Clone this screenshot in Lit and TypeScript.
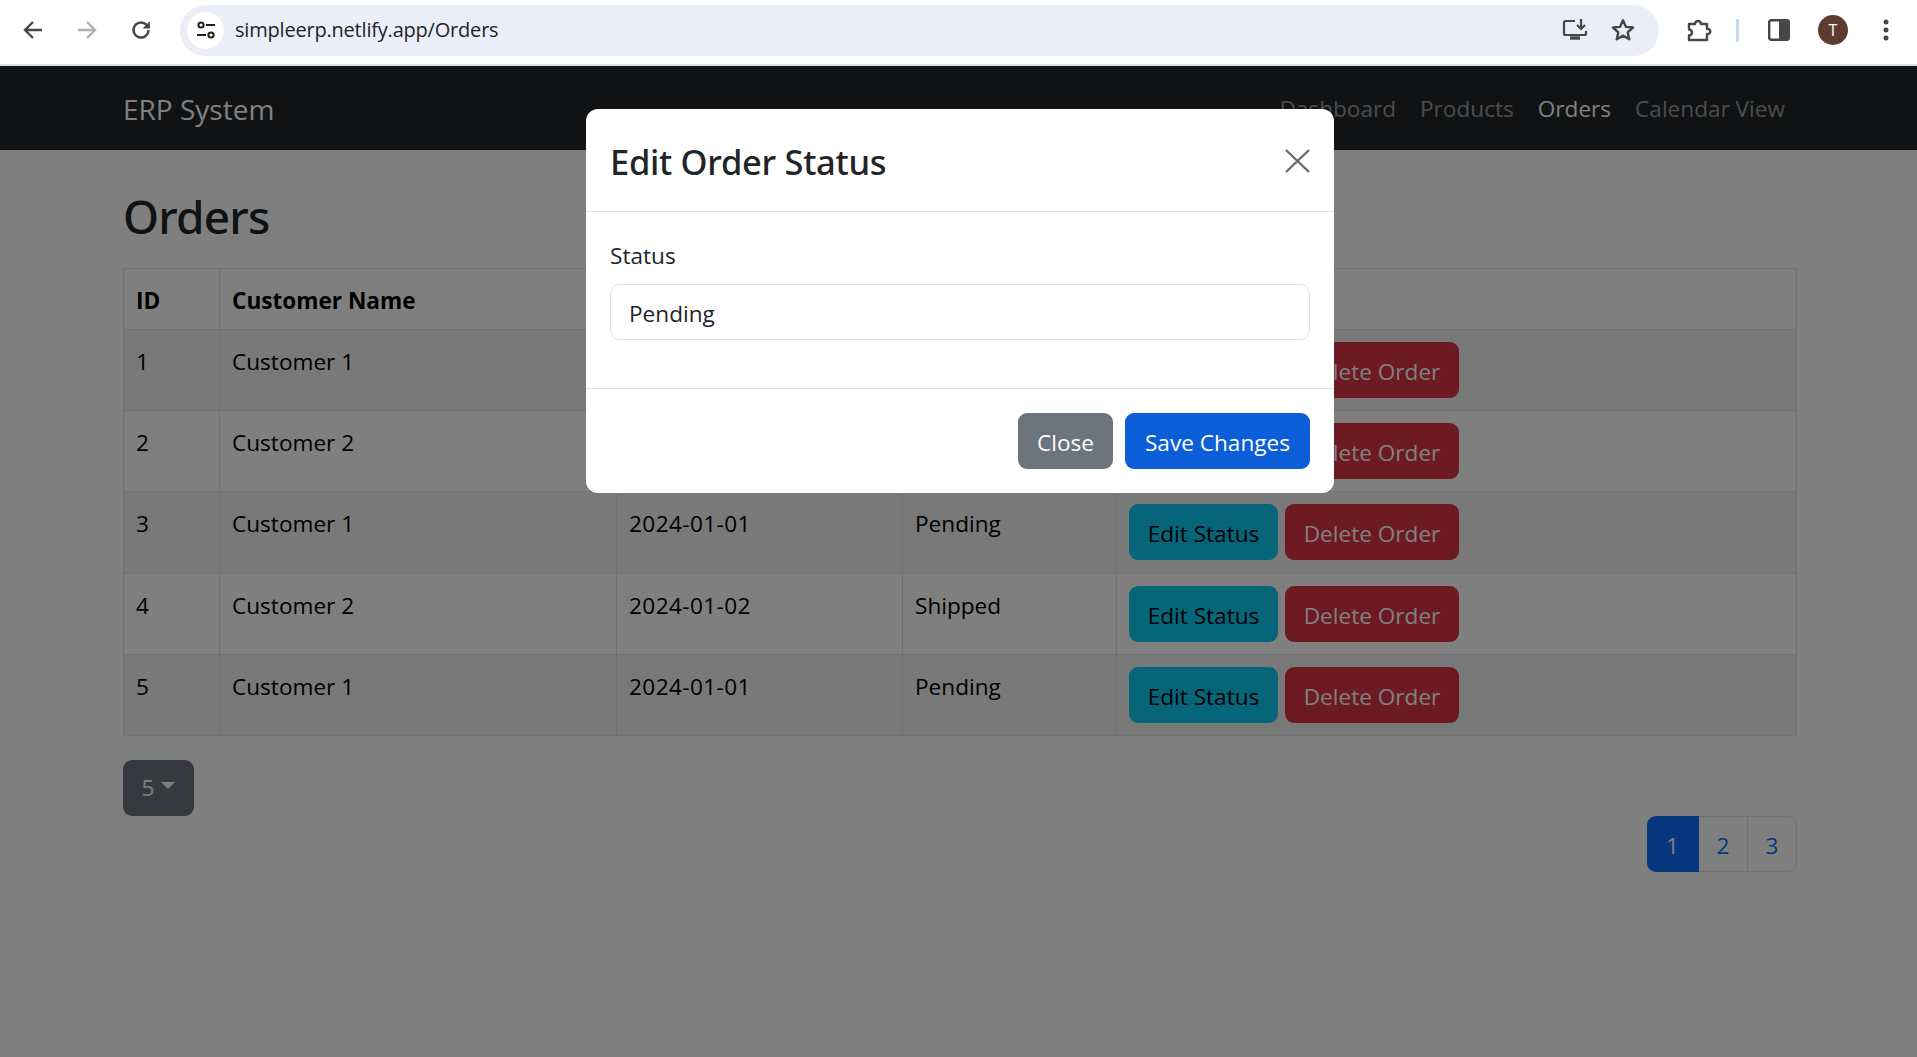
import { LitElement, html, css } from "lit";
import { customElement } from "lit/decorators.js";

const orders = [
  { id: 1, customer: "Customer 1", date: "2024-01-01", status: "Pending" },
  { id: 2, customer: "Customer 2", date: "2024-01-02", status: "Shipped" },
  { id: 3, customer: "Customer 1", date: "2024-01-01", status: "Pending" },
  { id: 4, customer: "Customer 2", date: "2024-01-02", status: "Shipped" },
  { id: 5, customer: "Customer 1", date: "2024-01-01", status: "Pending" },
];

@customElement("browser-bar")
export class BrowserBar extends LitElement {
  static styles = css`
    :host {
      display: flex;
      align-items: center;
      background: #fff;
      border-bottom: 2px solid #dfe0e2;
      padding: 0 0 4px 0;
      box-sizing: content-box;
      height: 60px;
      font-family: "Open Sans", sans-serif;
    }
    svg {
      display: block;
      flex: none;
    }
    .nav {
      display: flex;
      gap: 30px;
      margin-left: 21px;
      margin-right: 27px;
    }
    .pill {
      display: flex;
      align-items: center;
      width: 1479px;
      height: 51px;
      border-radius: 26px;
      background: #ebeef8;
      box-sizing: border-box;
      padding: 0 23px 0 7px;
    }
    .site {
      display: flex;
      align-items: center;
      justify-content: center;
      width: 37px;
      height: 37px;
      border-radius: 50%;
      background: #fff;
      margin-right: 11px;
    }
    .url {
      font-size: 20px;
      letter-spacing: -0.2px;
      color: #1f2328;
      flex: 1;
    }
    .pill-icons {
      display: flex;
      gap: 22px;
      align-items: center;
    }
    .tools {
      display: flex;
      align-items: center;
      margin-left: 27px;
    }
    .divider {
      width: 3px;
      height: 23px;
      background: #c9d8f6;
      margin: 0 29px 0 24px;
    }
    .avatar {
      width: 30px;
      height: 30px;
      border-radius: 50%;
      background: #5d3b31;
      color: #fff;
      font-size: 16px;
      display: flex;
      align-items: center;
      justify-content: center;
      margin: 0 35px 0 28px;
    }
  `;

  render() {
    return html`
      <div class="nav">
        <svg width="24" height="24" viewBox="0 0 24 24" fill="none" stroke="#474747" stroke-width="2.4">
          <path d="M21 12H4M12 4l-8 8 8 8" />
        </svg>
        <svg width="24" height="24" viewBox="0 0 24 24" fill="none" stroke="#b0b0b0" stroke-width="2.4">
          <path d="M3 12h17M12 4l8 8-8 8" />
        </svg>
        <svg width="24" height="24" viewBox="0 0 24 24" fill="none" stroke="#474747" stroke-width="2.4">
          <path d="M19.5 12a7.5 7.5 0 1 1-2.2-5.3L20 9.5" />
          <path d="M20.8 3.2v7.2h-7.2z" fill="#474747" stroke="none" />
        </svg>
      </div>
      <div class="pill">
        <div class="site">
          <svg width="20" height="20" viewBox="0 0 20 20" fill="none" stroke="#1f1f1f" stroke-width="2">
            <circle cx="5" cy="5" r="2.6" />
            <path d="M10 5h9M1 15h9" />
            <circle cx="15" cy="15" r="2.6" />
          </svg>
        </div>
        <span class="url">simpleerp.netlify.app/Orders</span>
        <div class="pill-icons">
          <svg width="26" height="24" viewBox="0 0 26 24" fill="none" stroke="#474747" stroke-width="2.2">
            <path d="M13 3H3.5a1.5 1.5 0 0 0-1.5 1.5v11A1.5 1.5 0 0 0 3.5 17h19a1.5 1.5 0 0 0 1.5-1.5V13" />
            <path d="M19 1v9M15 7l4 4 4-4" />
            <path d="M8 20h10" stroke-width="3.4" />
          </svg>
          <svg width="26" height="26" viewBox="0 0 24 24" fill="none" stroke="#474747" stroke-width="2.2" stroke-linejoin="round">
            <path d="M12 3l2.7 6.1 6.6.6-5 4.4 1.5 6.5L12 17.2l-5.8 3.4 1.5-6.5-5-4.4 6.6-.6z" />
          </svg>
        </div>
      </div>
      <div class="tools">
        <svg width="26" height="26" viewBox="0 0 26 26" fill="none" stroke="#474747" stroke-width="2.4" stroke-linejoin="round">
          <path d="M3 7h6a3 3 0 1 1 6 0h6v5a2.6 2.6 0 1 1 0 5v6H3v-4.5a3 3 0 1 0 0-6z" />
        </svg>
        <div class="divider"></div>
        <svg width="22" height="22" viewBox="0 0 22 22" fill="none">
          <rect x="1.2" y="1.2" width="19.6" height="19.6" rx="2" stroke="#474747" stroke-width="2.4" />
          <rect x="11" y="1" width="10" height="20" rx="1.5" fill="#474747" />
        </svg>
        <div class="avatar">T</div>
        <svg width="6" height="24" viewBox="0 0 6 24" fill="#474747">
          <circle cx="3" cy="4" r="2.5" />
          <circle cx="3" cy="12" r="2.5" />
          <circle cx="3" cy="20" r="2.5" />
        </svg>
      </div>
    `;
  }
}

@customElement("app-root")
export class AppRoot extends LitElement {
  static styles = css`
    :host {
      display: block;
      width: 1917px;
      height: 1057px;
      overflow: hidden;
      background: #fff;
      color: #212529;
      font-family: "Open Sans", sans-serif;
      font-size: 22.6px;
      line-height: 36px;
    }
    .page {
      position: relative;
      height: 991px;
    }
    .navbar {
      display: flex;
      align-items: center;
      justify-content: space-between;
      height: 84px;
      box-sizing: border-box;
      padding: 2px 120px 0 123px;
      background: #212529;
    }
    .brand {
      color: #fff;
      font-size: 28px;
    }
    .links {
      display: flex;
    }
    .links a {
      color: rgba(255, 255, 255, 0.55);
      padding: 0 12px;
    }
    .links a.active {
      color: #fff;
    }
    main {
      padding: 0 120px 0 123px;
    }
    h1 {
      margin: 0;
      padding: 38px 0 24px;
      font-family: "Noto Sans", sans-serif;
      font-size: 46px;
      font-weight: 500;
      letter-spacing: -0.8px;
      line-height: 56px;
    }
    table {
      width: 1673px;
      table-layout: fixed;
      border-collapse: collapse;
      color: #000;
    }
    th,
    td {
      border: 1px solid #dee2e6;
      padding: 14px 12px 10px;
      text-align: left;
      vertical-align: top;
      box-sizing: border-box;
    }
    th {
      height: 61px;
      font-weight: 700;
    }
    td {
      height: 81.2px;
    }
    td.date {
      letter-spacing: 0.4px;
    }
    tbody tr:nth-child(odd) td {
      background: rgba(0, 0, 0, 0.05);
    }
    .btn {
      display: inline-block;
      height: 56px;
      line-height: 60px;
      border-radius: 9px;
      text-align: center;
      box-sizing: border-box;
    }
    .actions {
      display: flex;
      gap: 7px;
      margin-top: -2px;
    }
    .info {
      width: 149px;
      background: #0dcaf0;
      color: #000;
    }
    .danger {
      width: 174px;
      background: #dc3545;
      color: #fff;
    }
    .dropdown {
      display: flex;
      align-items: center;
      justify-content: center;
      gap: 7px;
      width: 71px;
      margin-top: 24px;
      background: #6c757d;
      color: #fff;
    }
    .caret {
      border-top: 7px solid #fff;
      border-left: 7px solid transparent;
      border-right: 7px solid transparent;
      margin-top: -4px;
    }
    .pager {
      display: flex;
      justify-content: flex-end;
    }
    .pager span {
      height: 56px;
      line-height: 58px;
      text-align: center;
      box-sizing: border-box;
      border: 1px solid #dee2e6;
      border-left: none;
      color: #0d6efd;
      width: 49px;
    }
    .pager span.active {
      width: 52px;
      background: #0d6efd;
      border-color: #0d6efd;
      color: #fff;
      border-radius: 9px 0 0 9px;
    }
    .pager span:last-child {
      border-radius: 0 9px 9px 0;
    }
    .backdrop {
      position: absolute;
      inset: 0;
      background: rgba(0, 0, 0, 0.5);
    }
    .modal {
      position: absolute;
      top: 43px;
      left: 586px;
      width: 748px;
      background: #fff;
      border-radius: 12px;
      color: #212529;
    }
    .modal-header {
      display: flex;
      align-items: center;
      justify-content: space-between;
      height: 103px;
      box-sizing: border-box;
      padding: 0 24px;
      border-bottom: 1px solid #dee2e6;
    }
    .modal-title {
      font-family: "Noto Sans", sans-serif;
      font-size: 34.5px;
      font-weight: 500;
      letter-spacing: -0.3px;
      margin-top: 4px;
    }
    .close {
      display: block;
      margin: 2px 0 0 0;
    }
    .modal-body {
      padding: 24px 24px 48px;
      height: 176px;
      box-sizing: border-box;
    }
    .modal-body label {
      display: block;
      line-height: 40px;
      margin-bottom: 8px;
    }
    .input {
      height: 56px;
      line-height: 58px;
      box-sizing: border-box;
      border: 1px solid #dee2e6;
      border-radius: 9px;
      padding: 0 18px;
    }
    .modal-footer {
      display: flex;
      justify-content: flex-end;
      gap: 12px;
      padding: 24px;
      border-top: 1px solid #dee2e6;
    }
    .secondary {
      width: 95px;
      background: #6c757d;
      color: #fff;
    }
    .primary {
      width: 185px;
      background: #0b5ed7;
      color: #fff;
    }
  `;

  render() {
    return html`
      <browser-bar></browser-bar>
      <div class="page">
        <nav class="navbar">
          <span class="brand">ERP System</span>
          <div class="links">
            <a>Dashboard</a>
            <a>Products</a>
            <a class="active">Orders</a>
            <a>Calendar View</a>
          </div>
        </nav>
        <main>
          <h1>Orders</h1>
          <table>
            <colgroup>
              <col style="width:96px" />
              <col style="width:397px" />
              <col style="width:286px" />
              <col style="width:214px" />
              <col style="width:680px" />
            </colgroup>
            <thead>
              <tr>
                <th>ID</th>
                <th>Customer Name</th>
                <th>Order Date</th>
                <th>Status</th>
                <th>Actions</th>
              </tr>
            </thead>
            <tbody>
              ${orders.map(
                (o) => html`
                  <tr>
                    <td>${o.id}</td>
                    <td>${o.customer}</td>
                    <td class="date">${o.date}</td>
                    <td>${o.status}</td>
                    <td>
                      <div class="actions">
                        <span class="btn info">Edit Status</span>
                        <span class="btn danger">Delete Order</span>
                      </div>
                    </td>
                  </tr>
                `
              )}
            </tbody>
          </table>
          <div class="btn dropdown">5<i class="caret"></i></div>
          <div class="pager">
            <span class="active">1</span>
            <span>2</span>
            <span>3</span>
          </div>
        </main>
        <div class="backdrop"></div>
        <div class="modal">
          <div class="modal-header">
            <span class="modal-title">Edit Order Status</span>
            <svg class="close" width="25" height="24" viewBox="0 0 25 24" stroke="#6b6b6b" stroke-width="2.4">
              <path d="M1 1l23 22M24 1L1 23" />
            </svg>
          </div>
          <div class="modal-body">
            <label>Status</label>
            <div class="input">Pending</div>
          </div>
          <div class="modal-footer">
            <span class="btn secondary">Close</span>
            <span class="btn primary">Save Changes</span>
          </div>
        </div>
      </div>
    `;
  }
}
